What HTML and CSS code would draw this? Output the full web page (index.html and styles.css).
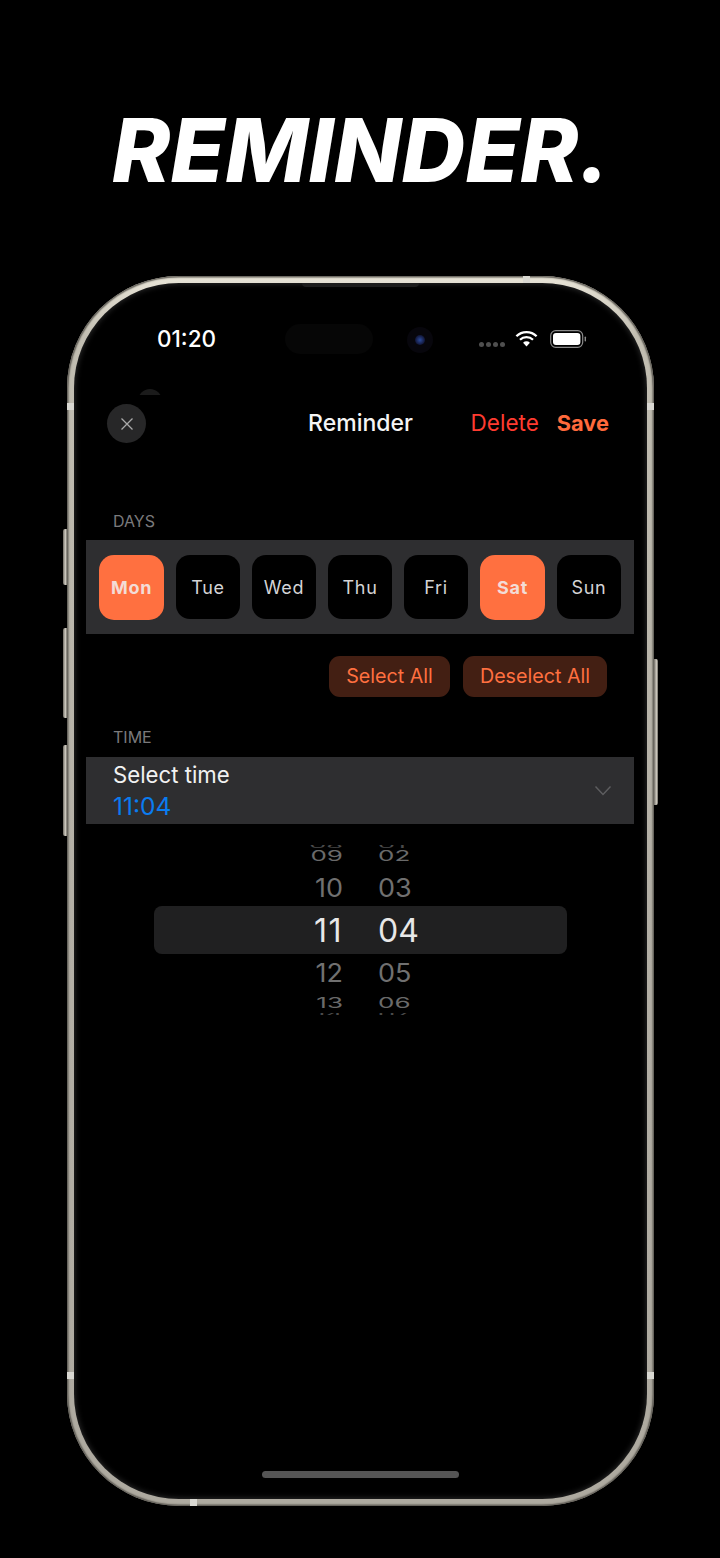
FILE: index.html
```html
<!DOCTYPE html>
<html lang="en">
<head>
<meta charset="utf-8">
<title>Reminder</title>
<link rel="stylesheet" href="styles.css">
</head>
<body>
<main class="page">
  <h1 class="headline">REMINDER.</h1>
  <div class="device">
    <span class="side side-silent"></span>
    <span class="side side-up"></span>
    <span class="side side-down"></span>
    <span class="side side-power"></span>
    <div class="bezel">
      <div class="band-tick tick-lt"></div>
      <div class="band-tick tick-rt"></div>
      <div class="band-tick tick-lb"></div>
      <div class="band-tick tick-rb"></div>
      <div class="band-tick tick-tr"></div>
      <div class="band-tick tick-bl"></div>
      <div class="screen">
        <div class="speaker"></div>
        <div class="island"></div>
        <div class="camera"><span class="lens"></span></div>
        <div class="dome"></div>
        <div class="status">
          <span class="clock">01:20</span>
          <div class="status-icons">
            <span class="dots"><i></i><i></i><i></i><i></i></span>
            <svg class="wifi" width="23" height="17" viewBox="0 0 23 17" aria-hidden="true">
              <path d="M1.4 6.2A14.4 14.4 0 0 1 21.6 6.2" fill="none" stroke="#fff" stroke-width="2.3"/>
              <path d="M5 9.8A9.3 9.3 0 0 1 18 9.8" fill="none" stroke="#fff" stroke-width="2.3"/>
              <path d="M8.1 12.7L11.5 16.4L14.9 12.7A4.8 4.8 0 0 0 8.1 12.7Z" fill="#fff"/>
            </svg>
            <svg class="battery" width="37" height="18" viewBox="0 0 37 18" aria-hidden="true">
              <rect x="0.7" y="0.7" width="32" height="16.6" rx="5" fill="none" stroke="#8a8a8a" stroke-width="1.2"/>
              <rect x="3" y="3" width="27.4" height="12" rx="3" fill="#fff"/>
              <rect x="34.6" y="6.5" width="1.4" height="5" rx="0.7" fill="#8a8a8a"/>
            </svg>
          </div>
        </div>
        <header class="nav">
          <div class="nav-left">
            <button class="close" aria-label="Close">
              <svg width="14" height="14" viewBox="0 0 14 14" aria-hidden="true"><path d="M1.5 1.5L12.5 12.5M12.5 1.5L1.5 12.5" stroke="#aaa" stroke-width="1.3" fill="none"/></svg>
            </button>
          </div>
          <div class="nav-title">Reminder</div>
          <div class="nav-right">
            <span class="delete">Delete</span>
            <span class="save">Save</span>
          </div>
        </header>
        <div class="label label-days">DAYS</div>
        <section class="days">
          <div class="day on">Mon</div>
          <div class="day">Tue</div>
          <div class="day">Wed</div>
          <div class="day">Thu</div>
          <div class="day">Fri</div>
          <div class="day on">Sat</div>
          <div class="day">Sun</div>
        </section>
        <div class="actions">
          <span class="pill pill-select">Select All</span>
          <span class="pill pill-deselect">Deselect All</span>
        </div>
        <div class="label label-time">TIME</div>
        <section class="time-row">
          <div class="time-text">
            <div class="time-title">Select time</div>
            <div class="time-value">11:04</div>
          </div>
          <svg class="chevron" width="18" height="12" viewBox="0 0 18 12" aria-hidden="true"><path d="M1.5 1.5L9 9.5L16.5 1.5" stroke="#5e5e60" stroke-width="1.4" fill="none"/></svg>
        </section>
        <section class="picker">
          <div class="row r-edge-top"><span>08</span><span>01</span></div>
          <div class="row r-far r-far-top"><span>09</span><span>02</span></div>
          <div class="row r-near r-near-top"><span>10</span><span>03</span></div>
          <div class="row r-current"><span>11</span><span>04</span></div>
          <div class="row r-near r-near-bottom"><span>12</span><span>05</span></div>
          <div class="row r-far r-far-bottom"><span>13</span><span>06</span></div>
          <div class="row r-edge-bottom"><span>14</span><span>07</span></div>
        </section>
        <div class="home"></div>
      </div>
    </div>
  </div>
</main>
</body>
</html>
```
FILE: styles.css
```css
* { box-sizing: border-box; }
html, body { margin: 0; padding: 0; background: #000; }
body { font-family: Inter, "Noto Sans", sans-serif; color: #fff; }
.page { width: 720px; height: 1558px; overflow: hidden; }

.headline {
  margin: 0;
  height: 276px;
  padding: 95px 0 0 2px;
  font-size: 88px;
  line-height: 110px;
  font-weight: 800;
  font-style: italic;
  letter-spacing: 0.3px;
  text-align: center;
  color: #fff;
}

.device { position: relative; width: 587px; height: 1230px; margin-left: 67px; }
.side {
  position: absolute;
  width: 4px;
  background: linear-gradient(90deg, #6f6b63, #cfcbc1 60%, #6f6b63);
  border-radius: 2px 0 0 2px;
}
.side-silent { left: -4px; top: 253px; height: 56px; }
.side-up { left: -4px; top: 352px; height: 90px; }
.side-down { left: -4px; top: 469px; height: 91px; }
.side-power { right: -4px; left: auto; top: 383px; height: 146px; border-radius: 0 2px 2px 0; }

.bezel {
  position: relative;
  width: 100%;
  height: 100%;
  padding: 7px;
  border-radius: 112px;
  background: linear-gradient(180deg, #e9e5d8 0, #c2beb2 5%, #b4b0a6 50%, #aeaaa0 100%);
  box-shadow: inset 0 0 1.5px 1.5px #5f5c55;
}
.band-tick { position: absolute; background: #d9d8d2; }
.tick-lt { left: 0; top: 127px; width: 7px; height: 7px; }
.tick-rt { right: 0; top: 127px; width: 7px; height: 7px; }
.tick-lb { left: 0; top: 1096px; width: 7px; height: 7px; }
.tick-rb { right: 0; top: 1096px; width: 7px; height: 7px; }
.tick-tr { left: 456px; top: 0; width: 7px; height: 7px; }
.tick-bl { left: 123px; bottom: 0; width: 7px; height: 7px; }

.screen {
  position: relative;
  width: 100%;
  height: 100%;
  background: #000;
  border-radius: 105px;
  box-shadow: inset 0 0 6px rgba(255, 255, 255, 0.22);
  overflow: hidden;
}
.speaker {
  position: absolute;
  left: 228px;
  top: 0;
  width: 117px;
  height: 4px;
  background: #1d1d1d;
  border-radius: 0 0 5px 5px;
}
.island {
  position: absolute;
  left: 211px;
  top: 41px;
  width: 88px;
  height: 30px;
  border-radius: 15px;
  background: #060606;
}
.camera {
  position: absolute;
  left: 333px;
  top: 44px;
  width: 26px;
  height: 26px;
  border-radius: 50%;
  background: #07060c;
  display: flex;
  align-items: center;
  justify-content: center;
}
.lens {
  width: 10px;
  height: 10px;
  border-radius: 50%;
  background: radial-gradient(circle, #2c4a9a 0, #141c44 60%, #07060c 100%);
}
.dome {
  position: absolute;
  left: 64px;
  top: 106px;
  width: 24px;
  height: 24px;
  border-radius: 50%;
  background: #1b1b1b;
  clip-path: inset(0 0 18px 0);
}

.status {
  height: 121px;
  padding: 44px 60px 0 83px;
  display: flex;
  align-items: flex-start;
  justify-content: space-between;
}
.clock { font-size: 22.5px; line-height: 24px; font-weight: 500; }
.status-icons { display: flex; align-items: flex-start; height: 24px; }
.dots { display: flex; gap: 2px; margin-top: 15px; margin-right: 10px; }
.dots i { display: block; width: 5px; height: 5px; border-radius: 50%; background: #4f4f4f; }
.wifi { margin-top: 3px; margin-right: 12px; }
.battery { margin-top: 3px; }

.nav {
  height: 38px;
  padding: 0 33px;
  display: grid;
  grid-template-columns: 1fr auto 1fr;
  align-items: center;
}
.close {
  width: 39px;
  height: 39px;
  padding: 0;
  border: 0;
  border-radius: 50%;
  background: #272728;
  display: flex;
  align-items: center;
  justify-content: center;
}
.nav-title { margin-bottom: 2px; font-size: 23px; line-height: 36px; font-weight: 500; color: #f5f5f5; }
.nav-right {
  margin-bottom: 2px;
  display: flex;
  justify-content: flex-end;
  gap: 18px;
  padding-right: 5px;
  font-size: 22.5px;
  line-height: 36px;
}
.delete { color: #ff3b30; font-weight: 400; }
.save { color: #ff6a3c; font-size: 21.8px; font-weight: 700; }

.label {
  height: 20px;
  padding-left: 39px;
  font-size: 16px;
  line-height: 20px;
  color: #7a7a7c;
}
.label-days { margin-top: 69px; margin-bottom: 9px; }
.label-time { margin-top: 30px; margin-bottom: 10px; }

.days {
  height: 94px;
  margin: 0 13px 0 12px;
  padding-left: 13px;
  background: #2e2e30;
  display: flex;
  align-items: center;
  gap: 12px;
}
.day {
  width: 64px;
  height: 64px;
  border-radius: 14px;
  background: #000;
  display: flex;
  align-items: center;
  justify-content: center;
  font-size: 18px;
  letter-spacing: 0.7px;
  color: #d4d4d6;
}
.day.on {
  width: 65px;
  height: 65px;
  border-radius: 15px;
  background: #ff7040;
  color: #f3dcd6;
  font-weight: 700;
}

.actions {
  margin-top: 22px;
  padding-right: 40px;
  display: flex;
  justify-content: flex-end;
  gap: 13px;
}
.pill {
  height: 41px;
  padding-bottom: 2px;
  border-radius: 11px;
  background: #431f13;
  color: #ff7040;
  display: flex;
  align-items: center;
  justify-content: center;
  font-size: 19.7px;
}
.pill-select { width: 121px; }
.pill-deselect { width: 144px; }

.time-row {
  height: 67px;
  margin: 0 13px 0 12px;
  padding: 0 22px 0 27px;
  background: #2e2e30;
  display: flex;
  align-items: center;
  justify-content: space-between;
}
.time-title { font-size: 22.2px; line-height: 30px; color: #f2f2f2; }
.time-value { font-size: 24.5px; line-height: 32px; color: #0a7cf0; }
.chevron { margin-top: 0; }

.picker {
  height: 170px;
  margin: 21px 80px 0;
  overflow: hidden;
  display: flex;
  flex-direction: column;
}
.row {
  flex: none;
  display: grid;
  grid-template-columns: 189px 1fr;
  grid-template-rows: 100%;
  column-gap: 35px;
  align-items: center;
  overflow: hidden;
  color: #707070;
  font-size: 27px;
  line-height: 30px;
}
.row span { display: block; transform-origin: left center; }
.row span:first-child { text-align: right; transform-origin: right center; }
.r-edge-top { height: 3px; margin-bottom: 1px; align-items: end; color: #4a4a4a; }
.r-edge-top span { transform: scaleY(0.3); margin-bottom: -12px; }
.r-far-top { height: 14px; }
.r-far-bottom { height: 21px; }
.r-far { color: #6a6a6a; font-size: 26px; }
.r-far span { transform: scaleY(0.55); }
.r-near-top { height: 43px; align-items: end; padding-bottom: 2px; }
.r-near-bottom { height: 38px; padding-top: 2px; }
.r-near span { transform: scaleY(0.93); }
.r-current {
  height: 48px;
  padding-top: 2px;
  border-radius: 8px;
  background: #202021;
  color: #e8e8e8;
  font-size: 32px;
  line-height: 48px;
}
.r-current span:first-child { letter-spacing: 1.5px; }
.r-edge-bottom { height: 2px; align-items: start; color: #4a4a4a; }
.r-edge-bottom span { transform: scaleY(0.3); margin-top: -14px; }

.home {
  position: absolute;
  left: 188px;
  bottom: 21px;
  width: 197px;
  height: 7px;
  border-radius: 4px;
  background: #555;
}
```
